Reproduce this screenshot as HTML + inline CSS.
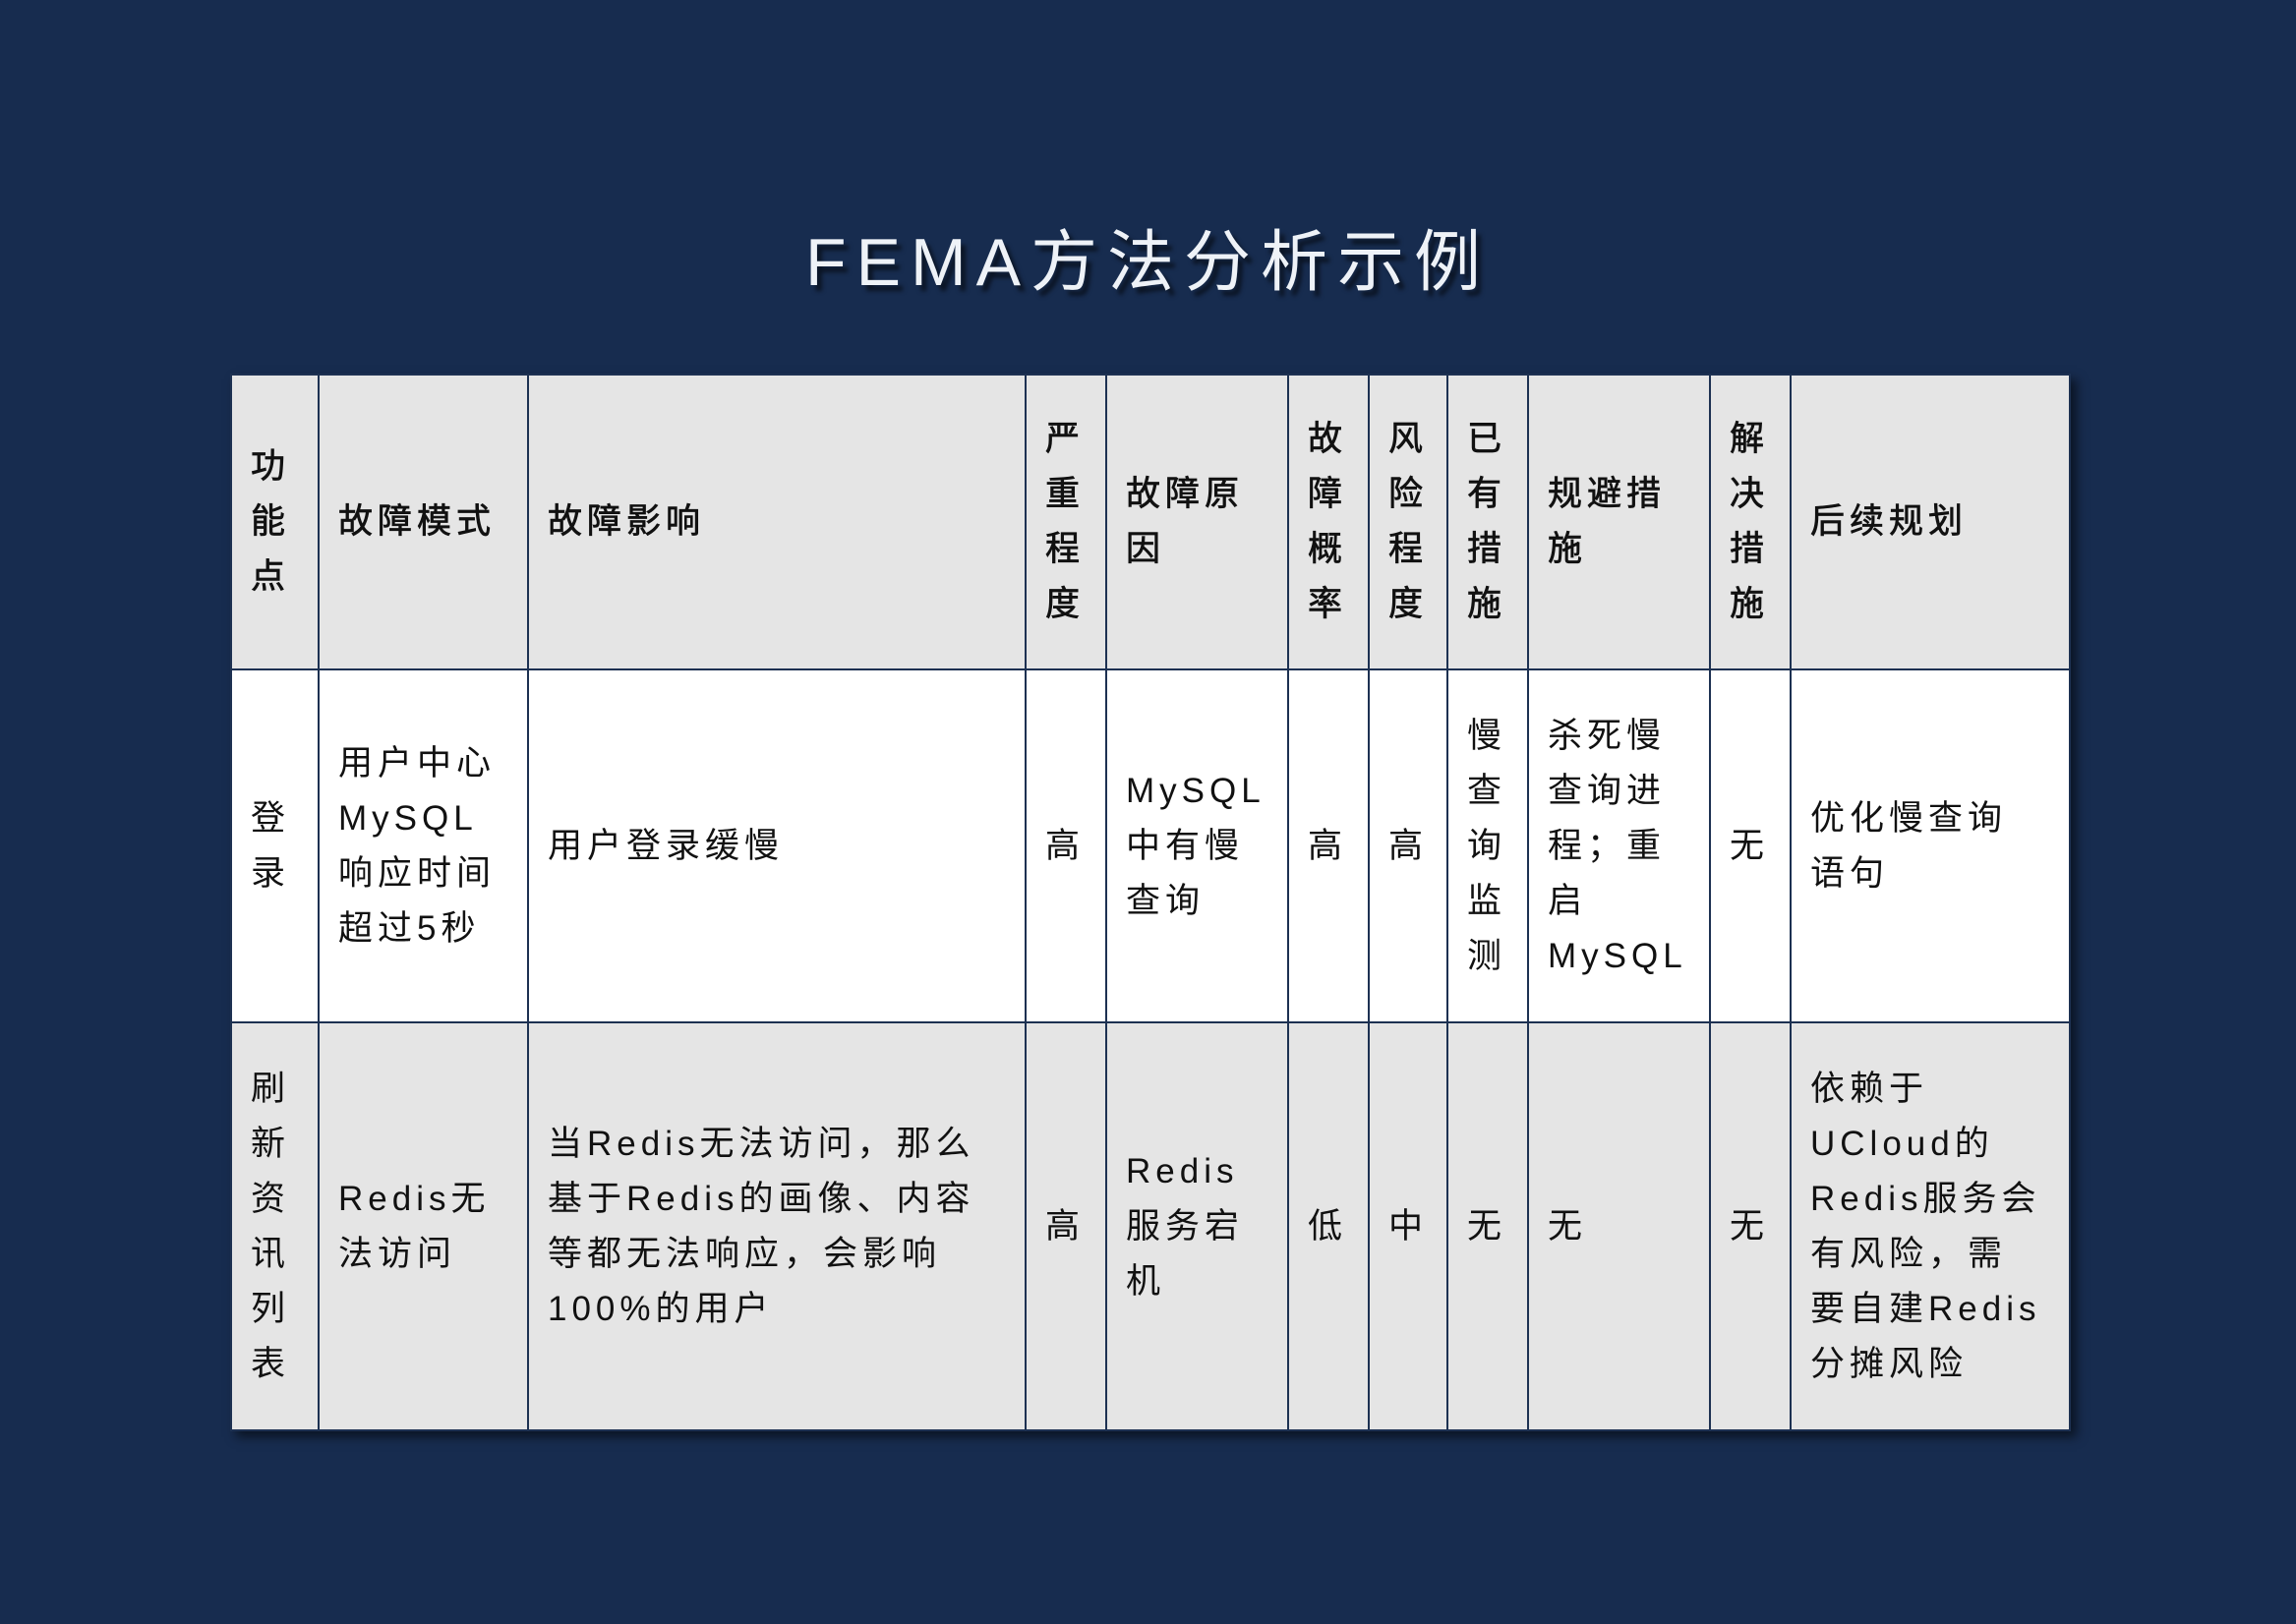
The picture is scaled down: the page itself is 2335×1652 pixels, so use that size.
<!DOCTYPE html>
<html><head><meta charset="utf-8">
<style>
html,body{margin:0;padding:0}
body{width:2335px;height:1652px;background:#172c4f;position:relative;overflow:hidden;font-family:"Liberation Sans","Noto Sans CJK SC",sans-serif}
.title{position:absolute;left:0;width:2335px;top:222px;text-align:center;color:#eef2f7;font-size:68px;letter-spacing:10px;line-height:90px;text-shadow:5px 6px 4px rgba(0,0,0,0.55)}
table{position:absolute;left:234px;top:380px;border-collapse:collapse;table-layout:fixed;width:1870px;box-shadow:6px 6px 10px rgba(0,0,0,0.55)}
td{border:2px solid #1d3152;padding:0 0 0 19px;vertical-align:middle;font-size:35px;line-height:56px;letter-spacing:5px;color:#111;overflow:hidden;white-space:nowrap}
tr.h td{background:#e5e5e5;font-weight:normal;-webkit-text-stroke:0.7px #111;height:298px}
tr.r1 td{background:#fff;height:357px}
tr.r2 td{background:#e5e5e5;height:413px}
</style></head><body>
<div class="title">FEMA方法分析示例</div>
<table>
<colgroup><col style="width:89px"><col style="width:213px"><col style="width:506px"><col style="width:82px"><col style="width:185px"><col style="width:82px"><col style="width:80px"><col style="width:82px"><col style="width:185px"><col style="width:82px"><col style="width:284px"></colgroup>
<tr class="h">
<td>功<br>能<br>点</td><td>故障模式</td><td>故障影响</td><td>严<br>重<br>程<br>度</td><td>故障原<br>因</td><td>故<br>障<br>概<br>率</td><td>风<br>险<br>程<br>度</td><td>已<br>有<br>措<br>施</td><td>规避措<br>施</td><td>解<br>决<br>措<br>施</td><td>后续规划</td>
</tr>
<tr class="r1">
<td>登<br>录</td><td>用户中心<br>MySQL<br>响应时间<br>超过5秒</td><td>用户登录缓慢</td><td>高</td><td>MySQL<br>中有慢<br>查询</td><td>高</td><td>高</td><td>慢<br>查<br>询<br>监<br>测</td><td>杀死慢<br>查询进<br>程；重<br>启<br>MySQL</td><td>无</td><td>优化慢查询<br>语句</td>
</tr>
<tr class="r2">
<td>刷<br>新<br>资<br>讯<br>列<br>表</td><td>Redis无<br>法访问</td><td>当Redis无法访问，那么<br>基于Redis的画像、内容<br>等都无法响应，会影响<br>100%的用户</td><td>高</td><td>Redis<br>服务宕<br>机</td><td>低</td><td>中</td><td>无</td><td>无</td><td>无</td><td>依赖于<br>UCloud的<br>Redis服务会<br>有风险，需<br>要自建Redis<br>分摊风险</td>
</tr>
</table>
</body></html>
